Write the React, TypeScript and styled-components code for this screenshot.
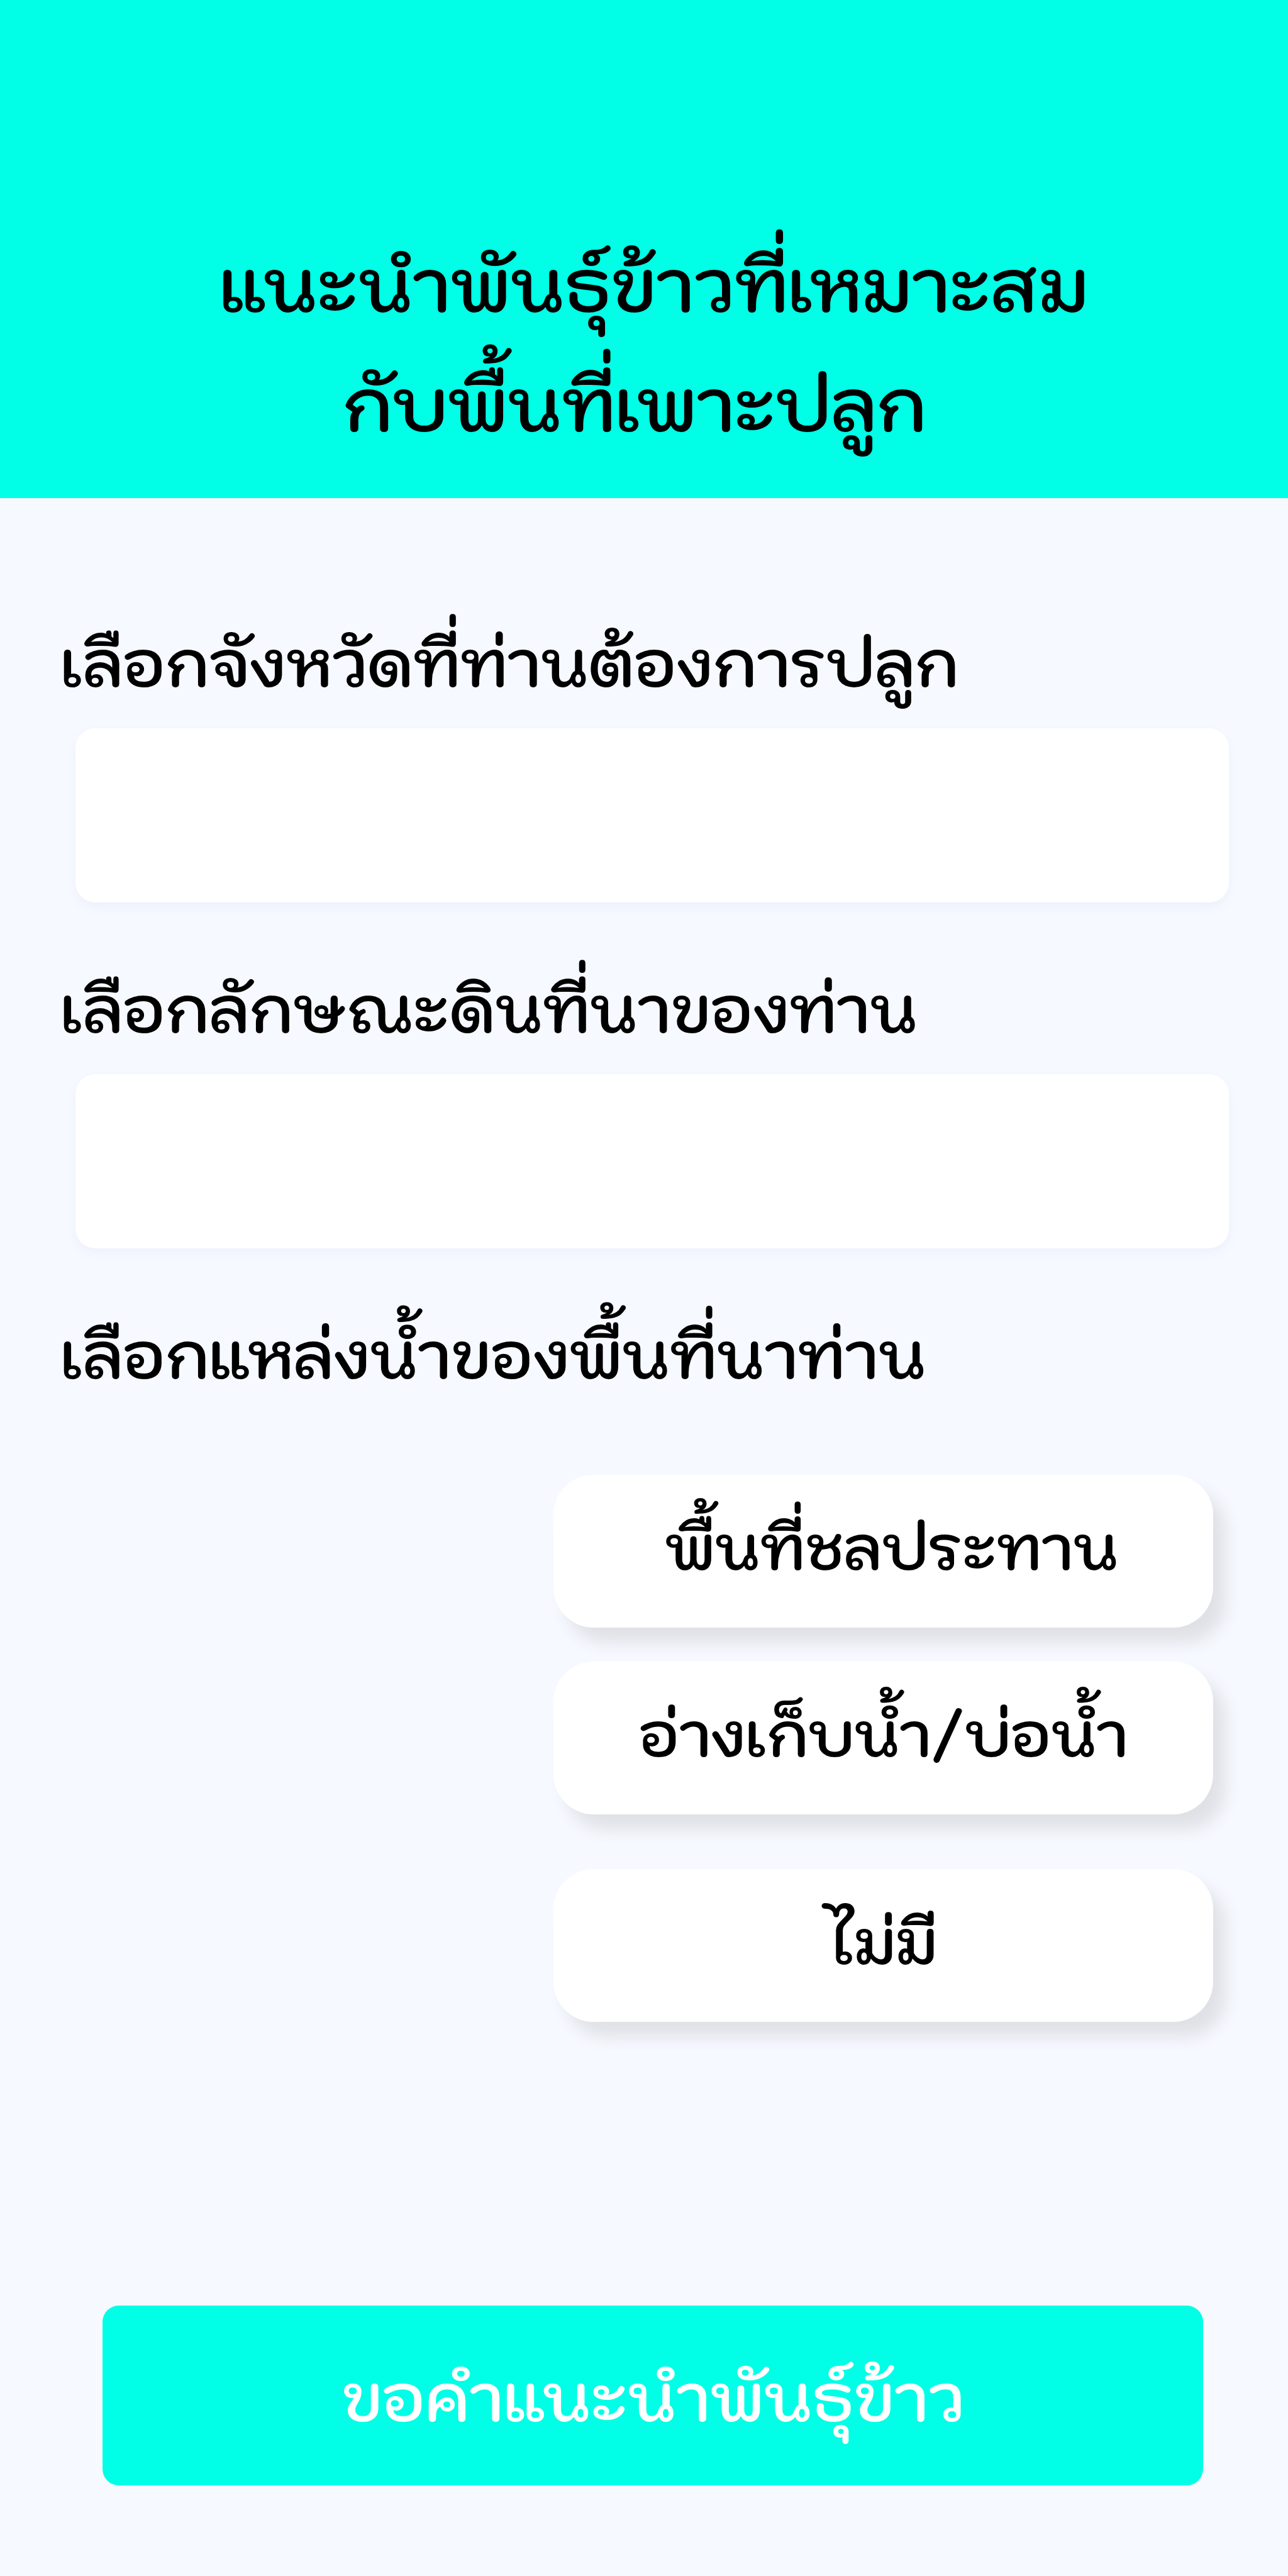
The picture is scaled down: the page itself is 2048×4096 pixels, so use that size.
import React, { useState } from "react";
import styled, { createGlobalStyle } from "styled-components";

const GlobalStyle = createGlobalStyle`
  *, *::before, *::after { box-sizing: border-box; }
  body {
    margin: 0;
    background: #f6f9ff;
    color: #000;
    font-family: Kodchasan, Itim, "Noto Sans", sans-serif;
    font-weight: 600;
  }
  button, select { font: inherit; color: inherit; border: 0; }
`;

const Page = styled.div`
  min-height: 100vh;
  display: flex;
  flex-direction: column;
`;

const Header = styled.header`
  background: #00ffe6;
  padding: 358px 64px 54px;
`;

const Title = styled.h1`
  margin: 0;
  font-size: 115px;
  line-height: 190px;
  font-weight: 600;
  text-align: center;
  white-space: pre;
`;

const Form = styled.form`
  flex: 1;
  display: flex;
  flex-direction: column;
  padding: 198px 94px 144px 96px;
`;

const Field = styled.div`
  display: flex;
  flex-direction: column;
  height: 550px;
`;

const Caption = styled.label`
  font-size: 101px;
  line-height: 130px;
`;

const Select = styled.select`
  appearance: none;
  height: 277px;
  margin: 38px 0 0 24px;
  padding: 0 60px;
  font-size: 96px;
  background: #fff;
  border-radius: 32px;
  box-shadow: 0 8px 16px #eef1fb;
`;

const Options = styled.div`
  display: flex;
  flex-direction: column;
  align-items: flex-end;
  padding: 125px 25px 0 0;
`;

const Option = styled.button<{ $gap?: number }>`
  width: 1049px;
  height: 243px;
  margin-bottom: ${(p) => p.$gap ?? 0}px;
  padding: 0 0 14px;
  font-size: 96px;
  line-height: 130px;
  background: #fff;
  border-radius: 64px;
  box-shadow: 20px 24px 26px #e0e1e6;
  white-space: pre;
`;

const Submit = styled.button`
  height: 286px;
  margin: auto 41px 0 67px;
  padding: 6px 0 0;
  font-size: 103px;
  line-height: 136px;
  color: #fff;
  background: #00ffe6;
  border-radius: 26px;
`;

const fields = [
  { id: "province", label: "เลือกจังหวัดที่ท่านต้องการปลูก" },
  { id: "soil", label: "เลือกลักษณะดินที่นาของท่าน" },
];

const sources = [
  { text: " พื้นที่ชลประทาน", gap: 54 },
  { text: "อ่างเก็บน้ำ/บ่อน้ำ", gap: 87 },
  { text: "ไม่มี", gap: 0 },
];

export default function App() {
  const [source, setSource] = useState("");

  return (
    <Page>
      <GlobalStyle />
      <Header>
        <Title>{" แนะนำพันธุ์ข้าวที่เหมาะสม\nกับพื้นที่เพาะปลูก "}</Title>
      </Header>
      <Form onSubmit={(e) => e.preventDefault()}>
        {fields.map((f) => (
          <Field key={f.id}>
            <Caption htmlFor={f.id}>{f.label}</Caption>
            <Select id={f.id} defaultValue="">
              <option value="" />
            </Select>
          </Field>
        ))}
        <Caption as="div" id="water">เลือกแหล่งน้ำของพื้นที่นาท่าน</Caption>
        <Options role="group" aria-labelledby="water">
          {sources.map((s) => (
            <Option
              key={s.text}
              type="button"
              $gap={s.gap}
              aria-pressed={source === s.text}
              onClick={() => setSource(s.text)}
            >
              {s.text}
            </Option>
          ))}
        </Options>
        <Submit type="submit">ขอคำแนะนำพันธุ์ข้าว</Submit>
      </Form>
    </Page>
  );
}
